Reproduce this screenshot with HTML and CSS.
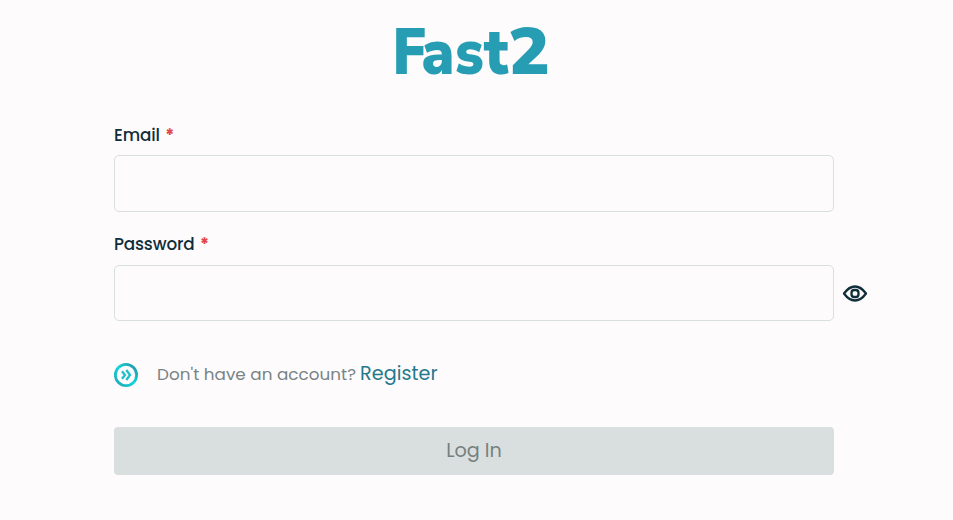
FILE: index.html
```html
<!DOCTYPE html>
<html lang="en">
<head>
<meta charset="utf-8">
<title>Fast2</title>
<link rel="stylesheet" href="styles.css">
</head>
<body>
<main class="login">
  <svg class="logo" width="156" height="56" role="img" aria-label="Fast2">
    <text class="wordmark" x="-1.700 31 68.500 101" y="51" transform="scale(.89 1)">Fast</text>
    <text class="wordmark" x="114" y="51" textLength="42" lengthAdjust="spacingAndGlyphs">2</text>
  </svg>
  <form class="form">
    <label class="label" for="email"><span>Email</span><span class="required">*</span></label>
    <input class="input" id="email" type="email">
    <label class="label label-password" for="password"><span>Password</span><span class="required">*</span></label>
    <div class="password-row">
      <input class="input input-password" id="password" type="password">
      <svg class="eye" width="26" height="20" viewBox="0 0 26 20">
        <path d="M2 10.500C6 5 9.500 3.500 13 3.500S20 5 24 10.500C20 16 16.500 17.500 13 17.500S6 16 2 10.500Z"/>
        <rect x="9.500" y="7" width="7" height="7" rx="2.800"/>
      </svg>
    </div>
    <div class="register">
      <svg class="arrow" width="24" height="24" viewBox="0 0 24 24">
        <defs><linearGradient id="ring" x1="0" y1="1" x2="1" y2="0"><stop offset=".1" stop-color="#20aebb"/><stop offset=".5" stop-color="#12d5dc"/><stop offset=".9" stop-color="#239dad"/></linearGradient></defs>
        <circle cx="12" cy="12" r="10.600" stroke="url(#ring)" stroke-width="2.800"/>
        <path d="M8 8.200L11 12L8 15.800M12.300 7L16 12L12.300 17" stroke="#20bfca" stroke-width="2.300"/>
      </svg>
      <span class="question">Don't have an account?</span>
      <a class="link" href="#">Register</a>
    </div>
    <button class="submit" type="button" disabled>Log In</button>
  </form>
</main>
</body>
</html>
```
FILE: styles.css
```css
* { box-sizing: border-box; }
body {
  margin: 0;
  background: #fdfbfc;
  color: #102d3a;
  font-family: Poppins, Inter, sans-serif;
}
.login { width: 720px; margin-left: 114px; padding-top: 23px; }
.logo { display: block; margin-left: 280px; overflow: visible; }
.wordmark { fill: #279db4; font-family: "Nunito Sans", Lato, sans-serif; font-size: 65px; font-weight: 900; }
.form { display: flex; flex-direction: column; margin-top: 44px; }
.label {
  display: flex;
  gap: 5.5px;
  height: 24px;
  margin-bottom: 8px;
  font-size: 16.8px;
  font-weight: 500;
  letter-spacing: -.15px;
  line-height: 25px;
}
.required { color: #e34646; font-weight: 700; }
.label-password { margin-top: 20px; margin-bottom: 9px; line-height: 24px; }
.input {
  width: 720px;
  height: 57px;
  flex: none;
  border: 1px solid #d8dfdf;
  border-radius: 5px;
  background: transparent;
  outline: 0;
}
.input-password { height: 56px; }
.password-row { display: flex; align-items: center; gap: 7.5px; }
.eye { flex: none; fill: none; stroke: #102d3a; stroke-width: 2.3; stroke-linejoin: round; }
.register { display: flex; align-items: center; height: 28px; margin-top: 40px; }
.arrow { flex: none; fill: none; }
.question { margin: -2px 0 0 19px; color: #788485; font-size: 16.8px; letter-spacing: .03px; white-space: nowrap; }
.link { margin: -4px 0 0 4px; color: #23798c; font-size: 19.2px; letter-spacing: .03px; text-decoration: none; }
.submit {
  height: 48px;
  margin-top: 38px;
  padding: 0 0 1px;
  border: 0;
  border-radius: 4px;
  background: #d9dfde;
  color: #76817f;
  font: 400 19.2px Poppins, Inter, sans-serif;
}
```
